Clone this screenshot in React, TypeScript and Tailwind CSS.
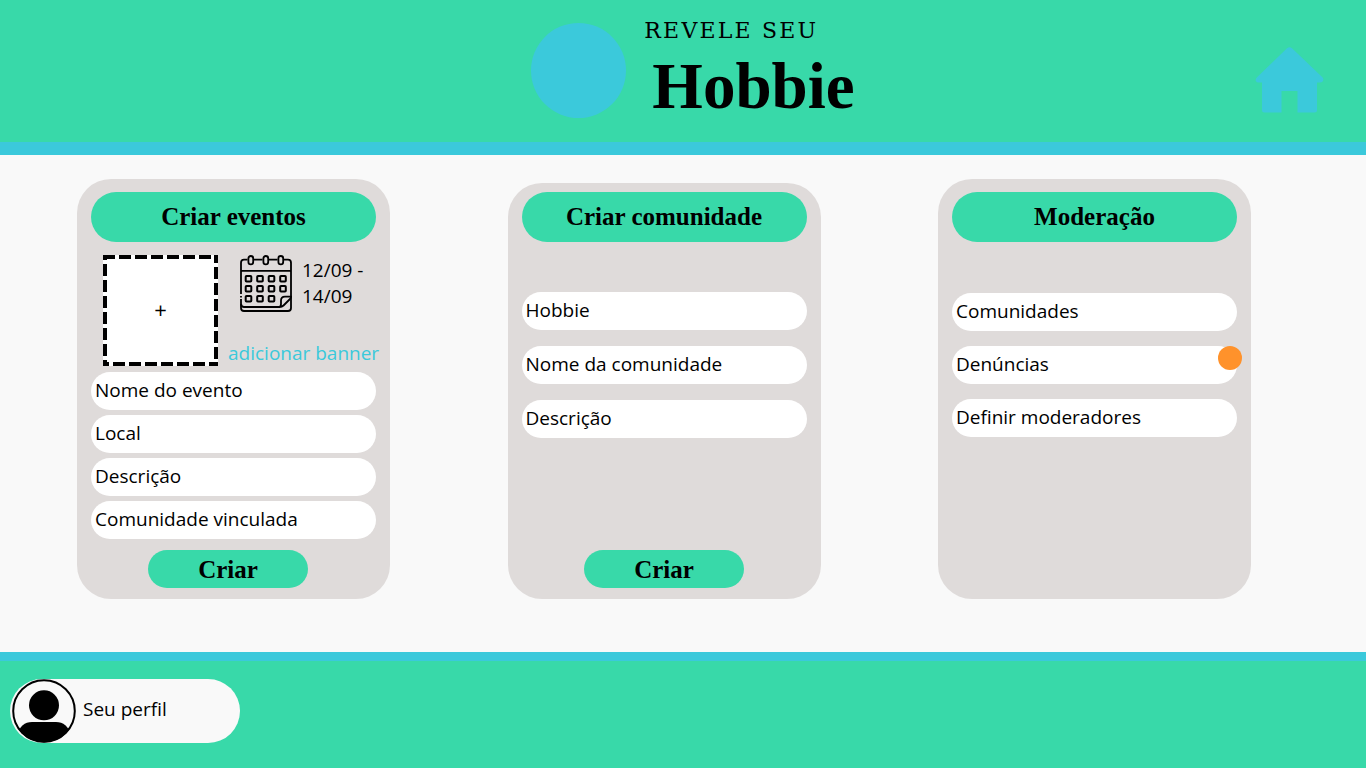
import type { ReactNode } from "react";

const display = "font-['Liberation_Serif',serif] font-bold";
const pill = "h-[38px] w-full rounded-full bg-white px-1 pb-[2px] text-left text-[19px] text-black";

function HomeIcon() {
  return (
    <svg viewBox="0 0 69 66" className="h-[66px] w-[69px] fill-[#3bc9db]" aria-hidden="true">
      <path d="M32 1.2 Q34.5 -0.8 37 1.2 L67.6 30.6 Q69.2 32.4 67.6 34.4 Q66.8 35.4 65 35.4 H62 V63 Q62 65.5 59.5 65.5 H42.5 V44 H26.5 V65.5 H9.5 Q7 65.5 7 63 V35.4 H3.5 Q1.6 35.4 1 34.2 Q0 32.4 1.8 30.6 Z" />
    </svg>
  );
}

function CalendarIcon() {
  const squares = [23.7, 33.7, 43.7].flatMap((y, row) =>
    [8.5, 20, 31.5, 43].slice(0, row === 2 ? 3 : 4).map((x) => ({ x, y })),
  );
  return (
    <svg viewBox="0 0 52 57" className="h-[57px] w-[52px] shrink-0 fill-none stroke-black stroke-[1.8]" aria-hidden="true">
      <path d="M7.5 4.7 H4 Q1 4.7 1 7.7 V39 M14 4.7 H22.5 M29 4.7 H37.5 M44 4.7 H48 Q51 4.7 51 7.7 V53 Q51 56 48 56 H4 Q1 56 1 53 V44 M1 41 V42.5 M1 15.8 H51" />
      <path d="M1 49 Q1.5 52 4 52 H39.5 Q42 52 43.5 50.5 L50 44 Q51 43 51 41.7 H45 Q41 41.7 41 45.5 V49 Q41 51.5 39 52" />
      {[10.8, 25.8, 40.8].map((x) => (
        <rect key={x} x={x - 2.4} y="1" width="4.8" height="8.4" rx="2.4" />
      ))}
      {squares.map(({ x, y }) => (
        <rect key={`${x}-${y}`} x={x - 2.8} y={y - 2.8} width="5.6" height="5.6" rx="0.8" className="stroke-2" />
      ))}
    </svg>
  );
}

function ProfileIcon() {
  return (
    <svg viewBox="0 0 64 64" className="size-[64px] shrink-0" aria-hidden="true">
      <clipPath id="avatar">
        <circle cx="32" cy="32" r="31.5" />
      </clipPath>
      <circle cx="32" cy="32" r="30.8" className="fill-none stroke-black stroke-2" />
      <circle cx="32" cy="26.3" r="15" />
      <path clipPath="url(#avatar)" d="M5 56 Q9 43 20 43 H44 Q55 43 59 56 V64 H5 Z" />
    </svg>
  );
}

function DashedFrame() {
  return (
    <svg viewBox="0 0 115 111" className="absolute inset-0 size-full fill-none stroke-black stroke-4" aria-hidden="true">
      <path d="M0 2 H115" strokeDasharray="12 4" />
      <path d="M113 0 V111" strokeDasharray="12 4" strokeDashoffset="4" />
      <path d="M0 109 H115" strokeDasharray="12 4" strokeDashoffset="6" />
      <path d="M2 0 V111" strokeDasharray="12 4" strokeDashoffset="7" />
    </svg>
  );
}

function Card({ title, className, children }: { title: string; className: string; children: ReactNode }) {
  return (
    <section className={`flex w-[313px] flex-col rounded-[34px] bg-[#dfdbda] px-[14px] pb-[11px] ${className}`}>
      <h2 className={`flex h-[50px] shrink-0 items-center justify-center rounded-full bg-[#38d9a9] text-[25px] ${display}`}>
        {title}
      </h2>
      {children}
    </section>
  );
}

function Field({ label }: { label: string }) {
  return <input type="text" aria-label={label} placeholder={label} className={`${pill} placeholder:text-black placeholder:opacity-100`} />;
}

function CreateButton() {
  return (
    <button type="submit" className={`h-[38px] w-[160px] rounded-full bg-[#38d9a9] text-[25px] leading-none ${display}`}>
      Criar
    </button>
  );
}

export default function App() {
  return (
    <div className="flex min-h-screen flex-col bg-[#f9f9f9] font-['Open_Sans',sans-serif] text-[19px] leading-[26px] text-black">
      <header className="grid grid-cols-[1fr_auto_1fr] items-start border-b-[13px] border-[#3bc9db] bg-[#38d9a9] pr-[42px] pb-6 pl-[62px]">
        <div className="col-start-2 flex">
          <div className="mt-[23px] size-[95px] rounded-full bg-[#3bc9db]" />
          <div className="pt-[17px] pl-[18px]">
            <p className="font-['DejaVu_Serif',serif] text-[22px] leading-[28px] tracking-widest">REVELE SEU</p>
            <h1 className={`pt-[9px] pl-2 text-[65px] leading-[64px] ${display}`}>Hobbie</h1>
          </div>
        </div>
        <a href="#inicio" aria-label="Início" className="mt-[47px] justify-self-end">
          <HomeIcon />
        </a>
      </header>

      <main className="flex flex-wrap justify-between gap-y-6 pt-6 pr-[115px] pb-[53px] pl-[77px]">
        <Card title="Criar eventos" className="min-h-[420px] pt-[13px]">
          <form className="flex flex-1 flex-col">
            <div className="flex justify-between pt-[13px] pb-[6px] pl-3">
              <button type="button" aria-label="Escolher banner" className="relative h-[111px] w-[115px] bg-white pb-1 text-[22px]">
                <DashedFrame />+
              </button>
              <div className="flex w-[148px] flex-col justify-between">
                <div className="flex gap-[10px] pl-3">
                  <CalendarIcon />
                  <p className="pt-[2px] whitespace-nowrap">
                    12/09 -<br />
                    14/09
                  </p>
                </div>
                <a href="#banner" className="whitespace-nowrap text-[#3bc9db]">
                  adicionar banner
                </a>
              </div>
            </div>
            <div className="flex flex-col gap-[5px]">
              <Field label="Nome do evento" />
              <Field label="Local" />
              <Field label="Descrição" />
              <Field label="Comunidade vinculada" />
            </div>
            <div className="mt-auto flex justify-center pr-[11px]">
              <CreateButton />
            </div>
          </form>
        </Card>

        <Card title="Criar comunidade" className="mt-1 min-h-[416px] pt-[9px]">
          <form className="flex flex-1 flex-col">
            <div className="flex flex-col gap-4 pt-[50px]">
              <Field label="Hobbie" />
              <Field label="Nome da comunidade" />
              <Field label="Descrição" />
            </div>
            <div className="mt-auto flex justify-center">
              <CreateButton />
            </div>
          </form>
        </Card>

        <Card title="Moderação" className="min-h-[420px] pt-[13px]">
          <div className="flex flex-col gap-[15px] pt-[51px]">
            <button type="button" className={pill}>Comunidades</button>
            <button type="button" className={`relative ${pill}`}>
              Denúncias
              <span className="absolute top-0 -right-[5px] size-6 rounded-full bg-[#ff922b]" />
            </button>
            <button type="button" className={pill}>Definir moderadores</button>
          </div>
        </Card>
      </main>

      <footer className="flex-1 border-t-[9px] border-[#3bc9db] bg-[#38d9a9] px-[10px] pt-[18px] pb-[25px]">
        <a href="#perfil" className="flex h-[64px] w-[230px] items-center gap-[7px] rounded-full bg-[#f9f9f9] pl-[2px]">
          <ProfileIcon />
          <span className="pb-1">Seu perfil</span>
        </a>
      </footer>
    </div>
  );
}
